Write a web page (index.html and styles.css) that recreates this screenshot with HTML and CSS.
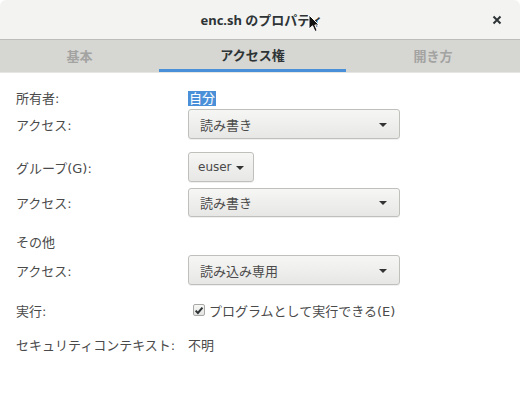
FILE: index.html
```html
<!DOCTYPE html>
<html lang="ja">
<head>
<meta charset="utf-8">
<link rel="stylesheet" href="styles.css">
</head>
<body>
<div class="window">
  <header class="titlebar">
    <span class="title">enc.sh のプロパティ</span>
    <svg class="close" width="10" height="10" viewBox="0 0 10 10"><path d="M1.5 1.5 L8.5 8.5 M8.5 1.5 L1.5 8.5" stroke="#2e3436" stroke-width="2"/></svg>
    <svg class="cursor" width="12" height="19" viewBox="0 0 12 19"><path d="M1 1 L1 15 L4.5 11.8 L7 17.5 L9.2 16.5 L6.8 11 L11 11 Z" fill="#111" stroke="#fff" stroke-width="1"/></svg>
  </header>
  <nav class="tabs">
    <div class="tab">基本</div>
    <div class="tab active">アクセス権</div>
    <div class="tab">開き方</div>
  </nav>
  <main class="content">
    <div class="row r-owner"><span class="label">所有者:</span><span class="value"><span class="sel">自分</span></span></div>
    <div class="row r-acc1"><span class="label">アクセス:</span><div class="combo wide"><span>読み書き</span><i class="arrow"></i></div></div>
    <div class="row r-group"><span class="label">グループ(G):</span><div class="combo small"><span>euser</span><i class="arrow"></i></div></div>
    <div class="row r-acc2"><span class="label">アクセス:</span><div class="combo wide"><span>読み書き</span><i class="arrow"></i></div></div>
    <div class="row r-other"><span class="label">その他</span></div>
    <div class="row r-acc3"><span class="label">アクセス:</span><div class="combo wide"><span>読み込み専用</span><i class="arrow"></i></div></div>
    <div class="row r-exec"><span class="label">実行:</span><label class="check"><span class="box"><svg width="11" height="11" viewBox="0 0 11 11"><path d="M1.8 5.6 L4.3 8.2 L9.3 2.4" fill="none" stroke="#2e3436" stroke-width="2.2"/></svg></span>プログラムとして実行できる(E)</label></div>
    <div class="row r-sec"><span class="label">セキュリティコンテキスト:</span><span class="value">不明</span></div>
  </main>
</div>
</body>
</html>
```
FILE: styles.css
```css
html, body { margin: 0; padding: 0; }
body {
  width: 520px; height: 412px; overflow: hidden;
  background: #ffffff;
  font-family: "DejaVu Sans", "Noto Sans CJK JP", sans-serif;
  font-size: 13px;
  color: #4a4a4a;
}
.window { width: 520px; height: 412px; background: #fff; }
.titlebar {
  position: relative;
  height: 39px;
  background: #f3f3f2;
  border-bottom: 1px solid #bcbcba;
  display: flex; align-items: center; justify-content: center;
  border-radius: 6px 6px 0 0;
}
.title { font-family: "Noto Sans", "Noto Sans CJK JP", sans-serif; font-weight: bold; color: #2e3436; font-size: 13px; padding-left: 3px; }
.close { position: absolute; right: 18px; top: 15px; }
.cursor { position: absolute; left: 308px; top: 14px; }
.tabs {
  height: 32px;
  background: #d6d6d3;
  border-bottom: 1px solid #e6e6e4;
  display: grid;
  grid-template-columns: 159px 187px 174px;
}
.tab {
  display: flex; align-items: center; justify-content: center;
  color: #a3a3a1; font-weight: bold; font-size: 13px;
  padding-bottom: 2px;
  box-sizing: border-box;
}
.tab.active { color: #2e3436; border-bottom: 3px solid #4a90d9; padding-bottom: 0; }
.content { padding: 15px 16px 0 16px; display: flex; flex-direction: column; }
.row { display: grid; grid-template-columns: 172px auto; align-items: center; }
.label { color: #4a4a4a; }
.r-owner { height: 18px; }
.r-acc1 { height: 30px; margin-top: 3px; }
.r-group { height: 30px; margin-top: 13px; }
.r-acc2 { height: 29px; margin-top: 6px; }
.r-other { height: 18px; margin-top: 15px; }
.r-acc3 { height: 30px; margin-top: 5px; }
.r-exec { height: 20px; margin-top: 15px; }
.r-sec { height: 20px; margin-top: 14px; }
.sel { background: #4a90d9; color: #fff; padding: 0 1px; }
.combo {
  box-sizing: border-box; height: 100%;
  display: flex; align-items: center; justify-content: space-between;
  border: 1px solid #bfbfbc; border-radius: 3px;
  background: linear-gradient(#f6f6f5, #e7e7e5);
  box-shadow: 0 1px 0 rgba(0,0,0,0.06);
  color: #4a4a4a;
}
.combo.wide { width: 212px; padding: 0 12px 0 11px; }
.combo.small { width: 66px; padding: 0 9px 0 9px; font-size: 12px; }
.arrow { width: 0; height: 0; border-left: 4px solid transparent; border-right: 4px solid transparent; border-top: 4px solid #333; margin-top: 1px; }
.check { display: flex; align-items: center; margin-left: 5px; color: #4a4a4a; }
.box {
  width: 12px; height: 12px; box-sizing: border-box;
  border: 1px solid #a8a8a6; border-radius: 2px;
  background: linear-gradient(#f7f7f6, #e4e4e2);
  display: flex; align-items: center; justify-content: center;
  margin-right: 4px;
}
```
